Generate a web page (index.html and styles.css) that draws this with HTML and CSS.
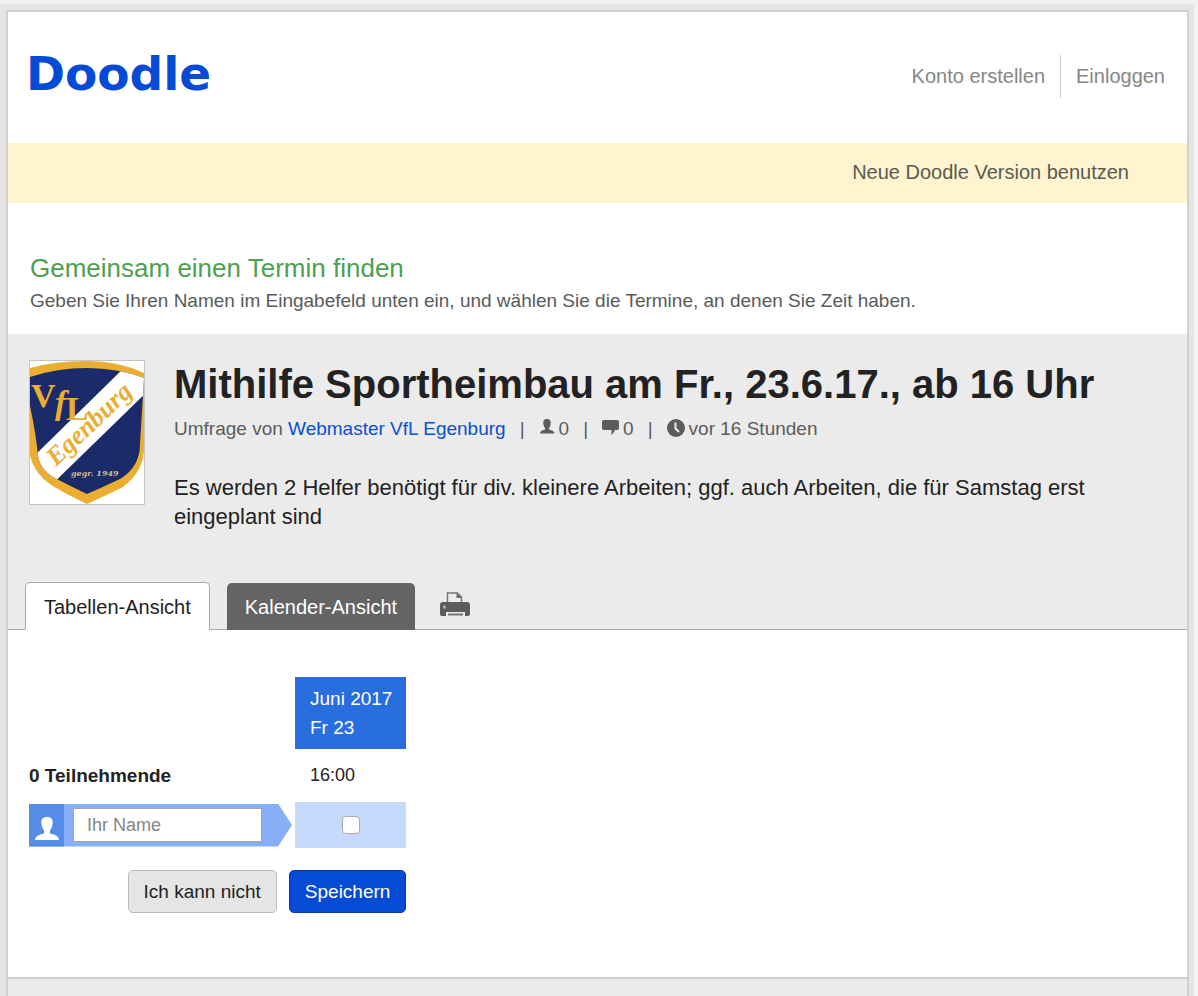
FILE: index.html
```html
<!DOCTYPE html>
<html lang="de">
<head>
<meta charset="utf-8">
<meta name="viewport" content="width=device-width, initial-scale=1">
<title>Doodle: Mithilfe Sportheimbau</title>
<link rel="stylesheet" href="styles.css">
</head>
<body>
<div class="frame">
  <div class="sheet">
    <header class="header">
      <a class="logo" href="#">Doodle</a>
      <nav class="account">
        <a class="account-link" href="#">Konto erstellen</a>
        <a class="account-link" href="#">Einloggen</a>
      </nav>
    </header>
    <div class="banner"><a class="banner-link" href="#">Neue Doodle Version benutzen</a></div>
    <section class="intro">
      <h2 class="intro-title">Gemeinsam einen Termin finden</h2>
      <p class="intro-text">Geben Sie Ihren Namen im Eingabefeld unten ein, und wählen Sie die Termine, an denen Sie Zeit haben.</p>
    </section>
    <section class="poll">
      <div class="poll-info">
        <svg class="crest" viewBox="0 0 116 145" role="img" aria-label="VfL Egenburg">
          <rect width="116" height="145" fill="#c4c4c4"/>
          <rect x="1" y="1" width="114" height="143" fill="#fff"/>
          <path d="M1 8Q26 1 58 1T115 13V88Q115 111 94 127Q76 136 58 144Q37 134 22 125Q5 113 1 96Z" fill="#e9ae32"/>
          <clipPath id="shield"><path d="M1 17Q28 8 58 8T115 18L111 84Q111 107 91 119Q74 127 58 134Q39 125 24 117Q11 109 9 96Q7 74 1 46Z"/></clipPath>
          <g clip-path="url(#shield)">
            <rect width="116" height="145" fill="#1b2a68"/>
            <path d="M-2 103L101 2H126V24L10 137Z" fill="#fff"/>
          </g>
          <g fill="#e9ae32" font-family="Liberation Serif, serif" font-weight="bold">
            <text x="2 26 37" y="47 54 60" font-size="34">V<tspan font-style="italic">f</tspan><tspan>L</tspan></text>
            <text transform="translate(27 107) rotate(-43.5)" font-style="italic" font-size="26">Egenburg</text>
          </g>
          <text x="42" y="116" font-family="DejaVu Serif, serif" font-style="italic" font-weight="bold" font-size="8" fill="#c9bd91">gegr. 1949</text>
        </svg>
        <div class="poll-body">
          <h1 class="poll-title">Mithilfe Sportheimbau am Fr., 23.6.17., ab 16 Uhr</h1>
          <div class="meta">
            <span>Umfrage von <a class="author" href="#">Webmaster VfL Egenburg</a></span>
            <span class="bar">|</span>
            <span class="stat"><svg class="stat-icon" viewBox="0 0 16 16" width="16" height="16"><path fill="#5c5c5c" d="M8 0C5 0 4 2 4.300 4.500Q4.400 7.500 6 9V10.500Q1 11.500 1 14.500H15.500Q15.300 11.500 10 10.500V9Q11.700 7.500 11.700 4.500C12 2 11 0 8 0Z"/></svg>0</span>
            <span class="bar">|</span>
            <span class="stat"><svg class="stat-icon" viewBox="0 0 17 16" width="17" height="16"><path fill="#5c5c5c" d="M2 1H15Q17 1 17 3V9Q17 11 15 11H13Q12 14 9 16Q10 13 9.500 11H2Q0 11 0 9V3Q0 1 2 1Z"/></svg>0</span>
            <span class="bar">|</span>
            <span class="stat"><svg class="stat-icon" viewBox="0 0 18 18" width="18" height="18"><circle cx="9" cy="9" r="9" fill="#5c5c5c"/><path d="M8.500 3.500V9.500L12 13" fill="none" stroke="#ececec" stroke-width="2"/></svg>vor 16 Stunden</span>
          </div>
          <p class="description">Es werden 2 Helfer benötigt für div. kleinere Arbeiten; ggf. auch Arbeiten, die für Samstag erst eingeplant sind</p>
        </div>
      </div>
      <div class="tabs">
        <button class="tab tab-active" type="button">Tabellen-Ansicht</button>
        <button class="tab tab-dark" type="button">Kalender-Ansicht</button>
        <button class="print" type="button" aria-label="Drucken">
          <svg viewBox="0 0 30 25" width="30" height="25"><path d="M7.500 11V1H17.500L21.500 5V11" fill="#ececec" stroke="#777" stroke-width="1.500"/><path d="M16.500 1V6H21.500Z" fill="#666"/><path d="M3 10H27Q30 10 30 13V22Q30 24 28 24H25V20H6V24H2Q0 24 0 22V13Q0 10 3 10Z" fill="#5c5c5c"/><circle cx="4.500" cy="15" r="1.700" fill="#a6a6a6"/><path d="M8 22.500H23" stroke="#777" stroke-width="2"/></svg>
        </button>
      </div>
    </section>
    <main class="content">
      <form class="vote">
        <table class="grid">
          <thead>
            <tr><td class="name-col"></td><th class="date" scope="col">Juni 2017<br>Fr 23</th></tr>
          </thead>
          <tbody>
            <tr class="time-row"><th class="count" scope="row">0 Teilnehmende</th><td class="time">16:00</td></tr>
            <tr>
              <td class="name-cell">
                <div class="name-entry">
                  <span class="avatar"><svg viewBox="0 0 24 24" width="24" height="24"><path fill="#fff" d="M12 1C8 1 6 3 6.300 7Q6.500 12 9 14.500V17.500Q0 19 0 24H24Q24 19 15 17.500V14.500Q17.500 12 17.700 7C18 3 16 1 12 1Z"/></svg></span>
                  <input class="name-input" type="text" placeholder="Ihr Name" aria-label="Ihr Name">
                </div>
              </td>
              <td class="choice"><input class="check" type="checkbox" aria-label="Fr 23, 16:00"></td>
            </tr>
          </tbody>
        </table>
        <div class="actions">
          <button class="btn" type="button">Ich kann nicht</button>
          <button class="btn btn-primary" type="button">Speichern</button>
        </div>
      </form>
    </main>
    <footer class="footer"></footer>
  </div>
</div>
</body>
</html>
```
FILE: styles.css
```css
* { box-sizing: border-box; }
html, body { height: 100%; }
body {
  margin: 0;
  padding: 4px 4px 0 0;
  background: #f2f2f2;
  color: #222;
  font-family: "Liberation Sans", Arial, sans-serif;
  font-size: 20px;
  line-height: 29px;
}
h1, h2, p { margin: 0; }
a { text-decoration: none; }
button, input { font: inherit; }
button { cursor: pointer; }

.frame {
  display: flex;
  min-height: 100%;
  padding: 6px 5px 0 6px;
  background: #e5e5e5;
}
.sheet {
  flex: 1;
  display: flex;
  flex-direction: column;
  border: 2px solid #d0d0d0;
  border-bottom: 0;
  background: #fff;
}

.header {
  display: flex;
  justify-content: space-between;
  align-items: flex-end;
  padding: 37px 22px 45px 18px;
}
.logo {
  color: #064bd6;
  font-family: "DejaVu Sans", sans-serif;
  font-size: 47px;
  font-weight: bold;
  line-height: 49px;
}
.account { display: flex; }
.account-link { color: #868686; line-height: 43px; }
.account-link + .account-link {
  margin-left: 15px;
  padding-left: 15px;
  border-left: 1px solid #ccc;
}

.banner {
  padding: 15px 58px 16px;
  background: #fef5d0;
  text-align: right;
}
.banner-link { color: #5c5a50; }

.intro { padding: 48px 22px 18px; }
.intro-title {
  color: #4f9f50;
  font-size: 26px;
  font-weight: normal;
  line-height: 34px;
}
.intro-text { color: #5a5a5a; font-size: 19px; line-height: 31px; }

.poll { background: #ebebeb; }
.poll-info { display: flex; gap: 29px; padding: 26px 60px 51px 21px; }
.crest { flex: none; width: 116px; height: 145px; }
.poll-title { font-size: 40px; line-height: 48px; }
.meta {
  display: flex;
  flex-wrap: wrap;
  margin-top: 6px;
  color: #5c5c5c;
  font-size: 19px;
  line-height: 30px;
}
.author { color: #0a50d0; }
.bar { margin: 0 14px; }
.stat { display: flex; gap: 4px; }
.stat-icon { margin-top: 5px; }
.description { margin-top: 29px; font-size: 22px; }

.tabs {
  display: flex;
  align-items: flex-end;
  padding-left: 17px;
  border-bottom: 1px solid #a8a8a8;
}
.tab {
  margin-bottom: -1px;
  padding: 10px 18px 8px;
  border: 0;
  border-radius: 5px 5px 0 0;
  line-height: 29px;
}
.tab-active {
  border: 1px solid #a8a8a8;
  border-bottom: 0;
  background: #fff;
  color: #222;
}
.tab-dark { margin-left: 17px; background: #646464; color: #fff; }
.print {
  display: flex;
  margin: 0 0 12px 25px;
  padding: 0;
  border: 0;
  background: none;
}

.content { padding: 47px 21px 64px; }
.vote { width: max-content; font-size: 19px; }
.grid { border-collapse: collapse; }
.grid th, .grid td { padding: 0; text-align: left; }
.name-col { width: 266px; }
.grid .date {
  padding: 7px 14px 7px 15px;
  background: #286edf;
  color: #fff;
  font-weight: normal;
}
.time-row { height: 53px; }
.grid .time { padding-left: 15px; font-size: 18px; }
.name-entry {
  display: flex;
  align-items: center;
  width: 263px;
  height: 43px;
  background: #86aff8;
  clip-path: polygon(0 0, 249px 0, 100% 50%, 249px 100%, 0 100%);
}
.avatar {
  display: flex;
  justify-content: center;
  align-items: flex-end;
  width: 35px;
  height: 43px;
  padding-bottom: 7px;
  background: #568ce6;
}
.name-input {
  width: 189px;
  height: 34px;
  margin-left: 9px;
  padding: 0 13px;
  border: 1px solid #a5a5a5;
  background: #fff;
  font-size: 18px;
}
.name-input::placeholder { color: #868686; }
.grid .choice { height: 46px; background: #c6dafb; text-align: center; }
.check {
  appearance: none;
  display: block;
  width: 18px;
  height: 18px;
  margin: 0 auto;
  border: 1px solid #aaa;
  border-radius: 4px;
  background: #fff;
}
.check:checked { background: #286edf; }
.actions {
  display: flex;
  justify-content: flex-end;
  gap: 12px;
  margin-top: 22px;
}
.btn {
  padding: 6px 15px;
  border: 1px solid #bbb;
  border-radius: 5px;
  background: #e5e5e5;
  color: #222;
  line-height: 29px;
}
.btn-primary { border-color: #0a3ca0; background: #064bd6; color: #fff; }

.footer {
  flex: 1;
  border-top: 2px solid #d0d0d0;
  background: #ebebeb;
}
```
